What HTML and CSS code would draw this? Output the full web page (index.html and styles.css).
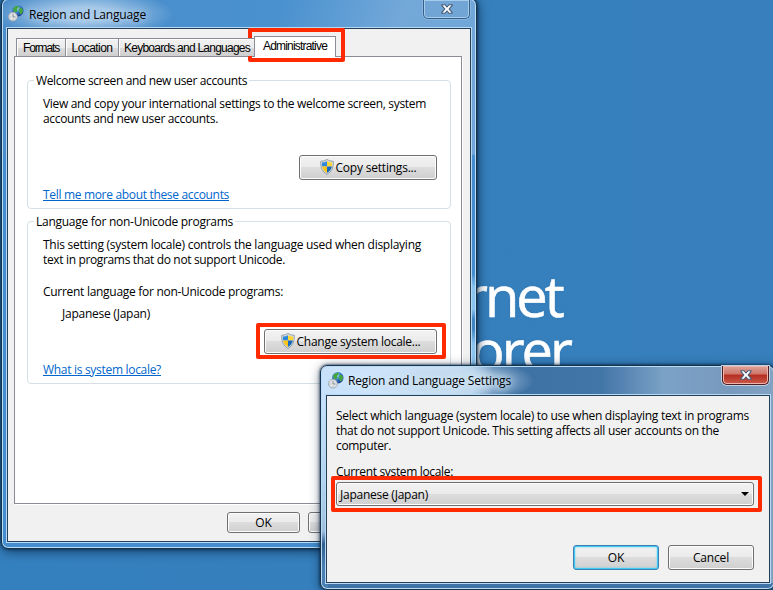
FILE: index.html
```html
<!DOCTYPE html>
<html lang="en">
<head>
<meta charset="utf-8">
<title>Region and Language</title>
<link rel="stylesheet" href="styles.css">
</head>
<body>
<svg class="defs" width="0" height="0" aria-hidden="true">
  <defs>
    <radialGradient id="sea" cx=".4" cy=".3" r=".75"><stop offset="0" stop-color="#b9e6fb"/><stop offset=".45" stop-color="#3a80cf"/><stop offset="1" stop-color="#112f83"/></radialGradient>
    <symbol id="globe" viewBox="0 0 16 17">
      <circle cx="9.8" cy="5.8" r="5.7" fill="url(#sea)"/>
      <path d="M5 3.5Q7 .5 10 .8L11 2 9 4 9.500 6 7.500 7.500 5.500 6ZM12 2.500Q15 3 15 6L14 8.500 12 9.500 11.500 7 10.500 5.500Z" fill="#43a63e"/>
      <circle cx="4.900" cy="11.700" r="4.400" fill="#dfe3e5" stroke="#9ba5ab" stroke-width=".9"/>
      <path d="M5 8.800V12H7.500M5 14.500v.6M1.800 12h.6" fill="none" stroke="#7d878d" stroke-width=".9"/>
    </symbol>
    <symbol id="shield" viewBox="0 0 14 16">
      <path d="M7 .5Q9.500 2.300 13.300 2.300Q14 11.500 7 15.500Q0 11.500.7 2.300Q4.500 2.300 7 .5Z" fill="#dce1e4" stroke="#8d989e" stroke-width=".9"/>
      <path d="M7 2.200V7.500H2.100Q1.700 5.500 2 3.500Q5 3.400 7 2.200Z" fill="#2f87da"/>
      <path d="M7 2.200V7.500H11.900Q12.300 5.500 12 3.500Q9 3.400 7 2.200Z" fill="#ffd633"/>
      <path d="M7 7.500V14Q3 11.700 2.100 7.500Z" fill="#f9c416"/>
      <path d="M7 7.500V14Q11 11.700 11.900 7.500Z" fill="#1769be"/>
    </symbol>
    <symbol id="cross" viewBox="0 0 12 10">
      <path d="M1 .7H4L6 3 8 .7h3v1L8.200 5 11 8.300v1H8L6 7 4 9.300H1v-1L3.800 5 1 1.700Z" fill="#fff" stroke="#465b76" stroke-width="1.100"/>
    </symbol>
  </defs>
</svg>
<main class="desktop">
  <div class="wallpaper"><div>rnet</div><div class="second">orer</div></div>

  <section class="window main-window">
    <header class="titlebar"><svg class="app-icon"><use href="#globe"/></svg><h1><span class="t" data-w="117">Region and Language</span></h1><button class="close"><svg><use href="#cross"/></svg></button></header>
    <div class="client">
      <nav class="tabs">
        <button class="tab formats"><span class="t" data-w="36">Formats</span></button>
        <button class="tab location"><span class="t" data-w="41">Location</span></button>
        <button class="tab keyboards"><span class="t" data-w="126">Keyboards and Languages</span></button>
        <button class="tab active"><span class="t" data-w="64">Administrative</span></button>
      </nav>
      <div class="page">
        <section class="group welcome">
          <h2><span class="t" data-w="211">Welcome screen and new user accounts</span></h2>
          <p><span class="t" data-w="383">View and copy your international settings to the welcome screen, system</span><br><span class="t" data-w="175">accounts and new user accounts.</span></p>
          <button class="button copy"><svg class="shield"><use href="#shield"/></svg><span class="t" data-w="81">Copy settings...</span></button>
          <a><span class="t" data-w="186">Tell me more about these accounts</span></a>
        </section>
        <section class="group language">
          <h2><span class="t" data-w="197">Language for non-Unicode programs</span></h2>
          <p><span class="t" data-w="378">This setting (system locale) controls the language used when displaying</span><br><span class="t" data-w="242">text in programs that do not support Unicode.</span></p>
          <p class="current"><span class="t" data-w="240">Current language for non-Unicode programs:</span></p>
          <p class="value"><span class="t" data-w="88">Japanese (Japan)</span></p>
          <button class="button change"><svg class="shield"><use href="#shield"/></svg><span class="t" data-w="124">Change system locale...</span></button>
          <a><span class="t" data-w="118">What is system locale?</span></a>
        </section>
      </div>
      <footer><button class="button">OK</button><button class="button"></button></footer>
    </div>
  </section>

  <div class="mark tab-mark"></div>
  <div class="mark change-mark"></div>

  <section class="window dialog">
    <header class="titlebar"><svg class="app-icon"><use href="#globe"/></svg><h1><span class="t" data-w="163">Region and Language Settings</span></h1><button class="close"><svg><use href="#cross"/></svg></button></header>
    <div class="client">
      <p><span class="t" data-w="413">Select which language (system locale) to use when displaying text in programs</span><br><span class="t" data-w="383">that do not support Unicode. This setting affects all user accounts on the</span><br><span class="t" data-w="55">computer.</span></p>
      <p class="label"><span class="t" data-w="117">Current system locale:</span></p>
      <div class="button combo"><span class="t" data-w="88">Japanese (Japan)</span><i></i></div>
      <footer><button class="button default">OK</button><button class="button"><span class="t" data-w="36">Cancel</span></button></footer>
    </div>
  </section>
  <div class="mark combo-mark"></div>
</main>
<script src="fit.js"></script>
</body>
</html>
```
FILE: styles.css
```css
* { box-sizing: border-box; }
body { margin: 0; font: 12px/15px "Open Sans", "Noto Sans", sans-serif; color: #000; }
h1, h2, p { margin: 0; font: inherit; }
button { font: inherit; color: inherit; padding: 0; border: 0; }
svg { display: block; }
.defs { position: absolute; }
.t { white-space: nowrap; }
.desktop { position: relative; width: 773px; height: 590px; overflow: hidden; background: linear-gradient(90deg, #347fbd, #3780bd); }
.wallpaper { position: absolute; left: 465px; top: 268px; color: #fff; font: 56px/54px "Open Sans", sans-serif; letter-spacing: -3px; -webkit-text-stroke: .6px #fff; text-shadow: 0 0 3px #2f6e9f66; }
.second { padding-left: 6px; }

.window { position: absolute; display: flex; flex-direction: column; border: 1px solid #17324c; box-shadow: inset 0 0 0 1px #b9ddf5, 0 0 3px #001b36, 1px 2px 11px #001b36b0; }
.main-window { left: 1px; top: -2px; width: 476px; height: 551px; padding: 0 5px 6px; border-radius: 7px; background: linear-gradient(180deg, transparent 155px, #458dce 158px 275px, #8bc3ef 288px 310px, #4284c1 320px 330px, #8bc3ef 345px), linear-gradient(180deg, transparent 155px, #458dce 158px), radial-gradient(ellipse 90px 24px at 82px 15px, #a4c8e8 30%, #a4c8e800), linear-gradient(105deg, #4c8dca 0, #4991cf 45%, #73a8d9 65%, #6ba2d6); background-size: 7px 100%, 100% 100%, 100% 29px, 100% 100%; background-position: right, 0 0, 0 0, 0 0; background-repeat: no-repeat; }
.titlebar { display: flex; height: 29px; padding: 7px 0 0 2px; flex: none; }
.app-icon { width: 16px; height: 17px; }
.titlebar h1 { margin: 0 auto 0 4px; line-height: 15px; text-shadow: 0 0 8px #d4eaffa0, 0 0 10px #d4eaffa0; }
.close { display: grid; place-items: center; width: 47px; height: 19px; border: 1px solid #35608c; border-top: 0; border-radius: 0 0 5px 5px; box-shadow: inset 0 0 0 1px #a6cceb, 0 0 0 1px #9bc3e488; background: #70a5d5; }
.close svg { width: 12px; height: 10px; }
.main-window .titlebar { padding: 6px 1px 0 1px; }
.main-window .titlebar h1 { margin-top: 2px; margin-left: 5px; }
.main-window .close { margin-top: -5px; }
.main-window .close svg { margin-top: -1px; }
.client { flex: 1; min-height: 0; background: #f1f1f1; border: 1px solid #263f59; box-shadow: 0 0 0 1px #b6daf4; }
.main-window .client { padding: 6px 8px 0 6px; }

.tabs { display: flex; align-items: flex-end; height: 21px; padding-left: 2px; position: relative; z-index: 1; font: 12px/14px "Liberation Sans", sans-serif; }
.tab { display: flex; justify-content: center; align-items: center; height: 18px; border: 1px solid #8b8c95; border-right-width: 0; border-bottom: 0; background: linear-gradient(#f2f2f2, #ebebeb 50%, #dcdcdc 50%, #cfcfcf); box-shadow: inset 1px 1px #fff; }
.formats { width: 49px; }
.location { width: 53px; }
.keyboards { width: 136px; justify-content: flex-start; padding-left: 5px; }
.tab.active { width: 82px; height: 21px; border-right-width: 1px; background: #fff; margin-bottom: -1px; padding-bottom: 2px; }
.page { height: 448px; background: #fff; border: 1px solid #8b8c95; padding: 23px 10px 0 12px; box-shadow: 1px 1px #fff; }
.group { height: 129px; display: flex; flex-direction: column; align-items: flex-start; border: 1px solid #d5dfe5; border-radius: 4px; padding: 0 13px 0 15px; margin-bottom: 12px; }
.language { height: 163px; }
h2 { flex: none; padding: 0 2px; background: #fff; }
.group h2 { margin: -8px 0 8px -9px; }
.group h2 .t { display: inline-block; }
.group a { color: #06c; text-decoration: underline; }
.button { display: flex; align-items: center; justify-content: center; height: 22px; border: 1px solid #707070; border-radius: 3px; box-shadow: inset 0 0 0 1px #fcfcfc; background: linear-gradient(#f2f2f2, #ebebeb 49%, #ddd 50%, #cfcfcf); }
.shield { width: 14px; height: 16px; margin-right: 2px; margin-top: -2px; }
.group .button { align-self: flex-end; height: 25px; flex: none; }
.copy { width: 138px; margin: 29px 0 7px; }
.change { width: 173px; margin: 8px 0 8px; }
.current { margin-top: 17px; }
.value { margin: 7px 0 0 19px; }
.main-window footer { display: flex; padding: 8px 0 0 213px; gap: 8px; }
.main-window footer .button { width: 73px; flex: none; height: 21px; }

.dialog { left: 320px; top: 365px; width: 455px; height: 225px; padding: 0 5px 6px; border-radius: 7px; background: linear-gradient(#c9e1fa 0, #b2d2f0 85px, #a0bfde 135px, #315e8f 148px, #4a7fb2 170px) 0 30px / 7px 100% no-repeat, radial-gradient(ellipse 85px 24px at 128px 15px, #c3daef 35%, #c3daef00) 0 0 / 100% 29px no-repeat, linear-gradient(#3f72a5, #3f72a5) 0 100% / 100% 6px no-repeat, linear-gradient(90deg, #c8e1fa 0, #d2e7fb 28%, #b6d4ed 33%, #3c70a2 38%, #4376a8 62%, #7ca2c7 76%, #7799bc 90%, #83a3c3); }
.dialog .titlebar h1 { margin-top: 1px; text-shadow: 0 0 7px #dbeefb, 0 0 10px #dbeefb; }
.dialog .titlebar { padding-top: 6px; }
.dialog .close { margin-top: -6px; border-color: #4d1d24; background: linear-gradient(#dda49b, #cf7467 45%, #b52c1f 50%, #ca5c4c); box-shadow: inset 0 0 0 1px #f0b5aa, 0 0 0 1px #c2d1e2; }
.dialog .client { width: 444px; padding: 12px 15px 0 9px; }
.label { margin-top: 11px; }
.combo { justify-content: flex-start; width: 418px; height: 24px; margin-top: 3px; padding: 0 4px 0 3px; }
.combo i { width: 0; height: 0; margin-left: auto; border: 4px solid transparent; border-top: 4px solid #000; border-bottom: 0; }
.dialog footer { display: flex; justify-content: flex-end; gap: 9px; padding: 39px 0 0; }
.dialog footer .button { width: 86px; height: 25px; }
.dialog .default { border-color: #3c7fb1; box-shadow: inset 0 0 0 1px #3fc9f3, inset 0 0 2px 1px #60d4f7; }
.mark { position: absolute; border: 4px solid #ff2a00; border-radius: 2px; }
.tab-mark { left: 248px; top: 28px; width: 97px; height: 34px; }
.change-mark { left: 256px; top: 323px; width: 190px; height: 36px; }
.combo-mark { left: 331px; top: 476px; width: 431px; height: 36px; }
```
FILE: fit.js
```js
// Spread each label over its designed width through letter spacing.
document.querySelectorAll('.t').forEach(function (el) {
  var wanted = Number(el.dataset.w);
  var count = el.textContent.length;
  var natural = el.getBoundingClientRect().width;
  el.style.letterSpacing = ((wanted - natural) / count) + 'px';
});
```
